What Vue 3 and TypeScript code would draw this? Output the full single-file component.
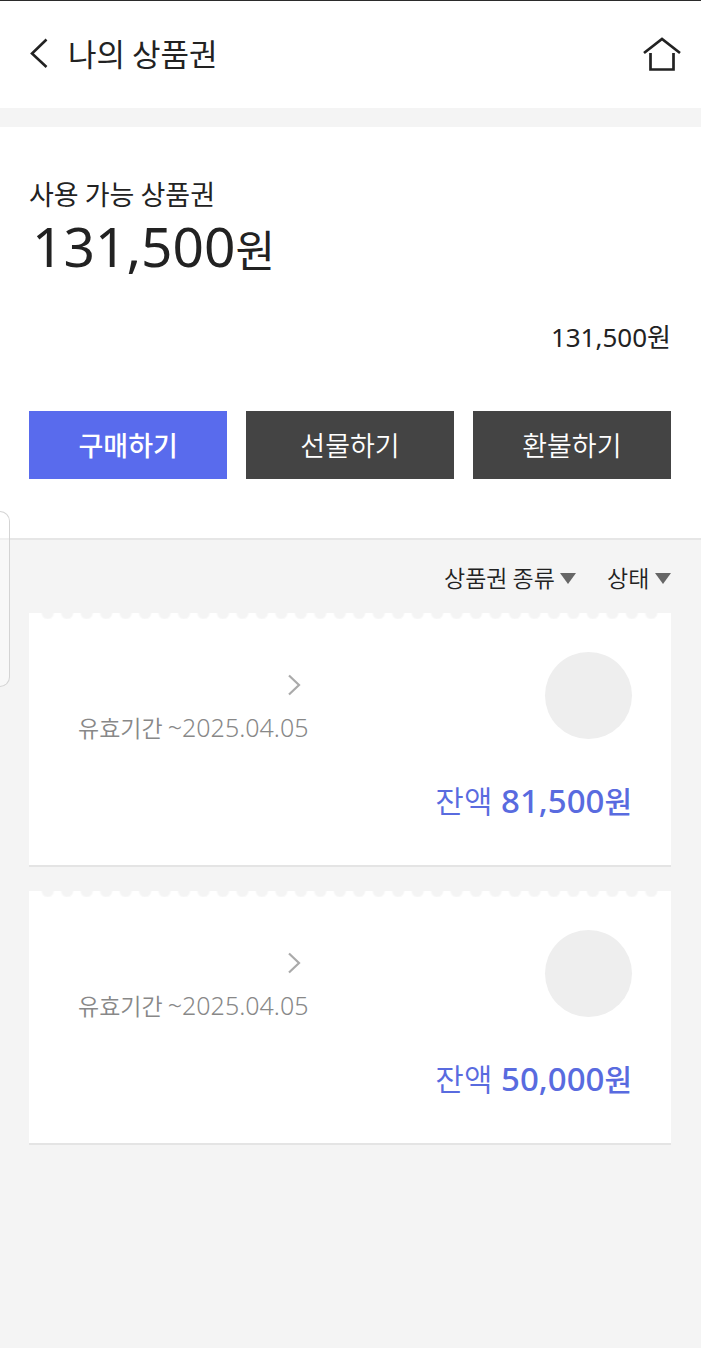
<script setup lang="ts">
interface Voucher {
  id: number
  expires: string
  balance: number
}

const vouchers: Voucher[] = [
  { id: 1, expires: '2025.04.05', balance: 81500 },
  { id: 2, expires: '2025.04.05', balance: 50000 },
]

const total = vouchers.reduce((sum, v) => sum + v.balance, 0)
const format = (n: number): string => n.toLocaleString('en-US')
</script>

<template>
  <div class="page">
    <header class="header">
      <button class="icon-button" type="button" aria-label="뒤로">
        <svg width="20" height="32" viewBox="0 0 20 32" fill="none">
          <path d="M17.500 2.500 3 16.500l14.500 13.500" stroke="#222" stroke-width="2.600" />
        </svg>
      </button>
      <h1 class="title">나의 상품권</h1>
      <a class="home" href="#" aria-label="홈">
        <svg width="40" height="36" viewBox="0 0 40 36" fill="none">
          <path d="M2 18 20 4l18 14" stroke="#222" stroke-width="2.700" />
          <path d="M8.500 18v16.500h23V18" stroke="#222" stroke-width="2.700" />
        </svg>
      </a>
    </header>

    <section class="summary">
      <h2 class="label">사용 가능 상품권</h2>
      <p class="total">{{ format(total) }}<span class="won">원</span></p>
      <p class="subtotal">{{ format(total) }}<span class="won">원</span></p>
      <div class="actions">
        <button class="action primary" type="button">구매하기</button>
        <button class="action middle" type="button">선물하기</button>
        <button class="action" type="button">환불하기</button>
      </div>
    </section>

    <main class="list">
      <div class="filters">
        <div class="filter">
          <select aria-label="상품권 종류">
            <option>상품권 종류</option>
          </select>
          <svg class="caret" width="16" height="11" viewBox="0 0 16 11"><path d="M0 0h16L8 11z" fill="#666" /></svg>
        </div>
        <div class="filter">
          <select aria-label="상태">
            <option>상태</option>
          </select>
          <svg class="caret" width="16" height="11" viewBox="0 0 16 11"><path d="M0 0h16L8 11z" fill="#666" /></svg>
        </div>
      </div>

      <article v-for="v in vouchers" :key="v.id" class="card">
        <div class="perforation"></div>
        <div class="card-top">
          <div class="info">
            <button class="detail" type="button" aria-label="상세 보기">
              <svg width="14" height="22" viewBox="0 0 14 22" fill="none">
                <path d="M2 1.500 12 11 2 20.500" stroke="#aaa" stroke-width="2.200" />
              </svg>
            </button>
            <p class="expiry"><span class="expiry-label">유효기간 </span>~{{ v.expires }}</p>
          </div>
          <div class="thumb"></div>
        </div>
        <p class="balance">
          <span class="balance-label">잔액</span> <strong>{{ format(v.balance) }}<span class="won">원</span></strong>
        </p>
      </article>
    </main>

    <div class="edge-handle"></div>
  </div>
</template>

<style>
body {
  background: #f4f4f4;
}
</style>

<style scoped>
.page {
  position: relative;
  min-height: 100vh;
  box-sizing: border-box;
  overflow: hidden;
  border-top: 1px solid #2b2b2b;
  background: #f4f4f4;
  color: #222;
  font-family: "Noto Sans CJK KR", sans-serif;
}

h1,
h2,
p {
  margin: 0;
  font-weight: 400;
}

button,
select {
  padding: 0;
  border: 0;
  border-radius: 0;
  background: none;
  color: inherit;
  font-family: inherit;
}

svg {
  display: block;
}

.header {
  display: flex;
  align-items: center;
  height: 107px;
  box-sizing: border-box;
  padding: 0 19px 4px 29px;
  background: #fff;
}

.title {
  flex: 1;
  margin-left: 19px;
  font-size: 31px;
  line-height: 44px;
}

.summary {
  margin-top: 19px;
  padding: 47px 30px 59px 29px;
  border-bottom: 2px solid #e6e6e6;
  background: #fff;
}

.label {
  font-size: 27px;
  line-height: 40px;
}

.total,
.subtotal,
.expiry,
.balance {
  font-family: "Noto Sans", "Noto Sans CJK KR", sans-serif;
}

.won,
.expiry-label,
.balance-label {
  font-family: "Noto Sans CJK KR", sans-serif;
}

.won {
  font-weight: 500;
}

.total {
  margin-left: 3px;
  font-size: 55px;
  line-height: 64px;
}

.total .won {
  font-size: 43px;
  font-weight: 400;
}

.subtotal {
  margin-top: 36px;
  font-size: 26px;
  line-height: 40px;
  text-align: right;
}

.subtotal .won {
  font-size: 26px;
  font-weight: 400;
}

.actions {
  display: flex;
  gap: 19px;
  margin-top: 54px;
}

.action {
  flex: 198;
  height: 68px;
  background: #444;
  color: #fff;
  font-size: 27px;
  font-weight: 350;
  line-height: 40px;
}

.action.middle {
  flex: 207;
}

.action.primary {
  background: #596bed;
  font-weight: 500;
}

.list {
  display: flex;
  flex-direction: column;
  gap: 24px;
  padding: 19px 30px 40px 29px;
}

.filters {
  display: flex;
  justify-content: flex-end;
  gap: 31px;
  height: 30px;
}

.filter {
  position: relative;
}

.filter select {
  appearance: none;
  height: 36px;
  padding-right: 21px;
  font-size: 23px;
  font-weight: 350;
  line-height: 36px;
}

.caret {
  position: absolute;
  top: 14px;
  right: 0;
  pointer-events: none;
}

.card {
  border-bottom: 2px solid #e4e4e4;
  background: #fff;
}

.perforation {
  height: 6px;
  margin: 0 10px 0 9px;
  background: radial-gradient(circle at 50% 0, #f4f4f4 5px, transparent 7px) 0 0 / 3.125% 6px repeat-x;
}

.card-top {
  display: flex;
  justify-content: space-between;
  padding: 33px 39px 0 49px;
}

.info {
  display: flex;
  flex-direction: column;
  align-items: flex-end;
}

.detail {
  margin: 22px 7px 0 0;
}

.expiry {
  margin-top: 13px;
  color: #888;
  font-size: 25px;
  font-weight: 350;
  line-height: 36px;
}

.expiry-label {
  font-size: 23px;
}

.thumb {
  width: 87px;
  height: 87px;
  border-radius: 50%;
  background: #eee;
}

.balance {
  padding: 31px 39px 40px;
  color: #596bdf;
  font-size: 33px;
  line-height: 48px;
  text-align: right;
}

.balance-label {
  font-size: 31px;
  font-weight: 350;
}

.balance strong {
  font-weight: 500;
}

.balance .won {
  font-size: 30px;
}

.edge-handle {
  position: absolute;
  top: 510px;
  left: 0;
  width: 9px;
  height: 174px;
  border: 1px solid #d4d4d4;
  border-left: 0;
  border-radius: 0 10px 10px 0;
  background: rgba(255, 255, 255, 0.4);
}
</style>
